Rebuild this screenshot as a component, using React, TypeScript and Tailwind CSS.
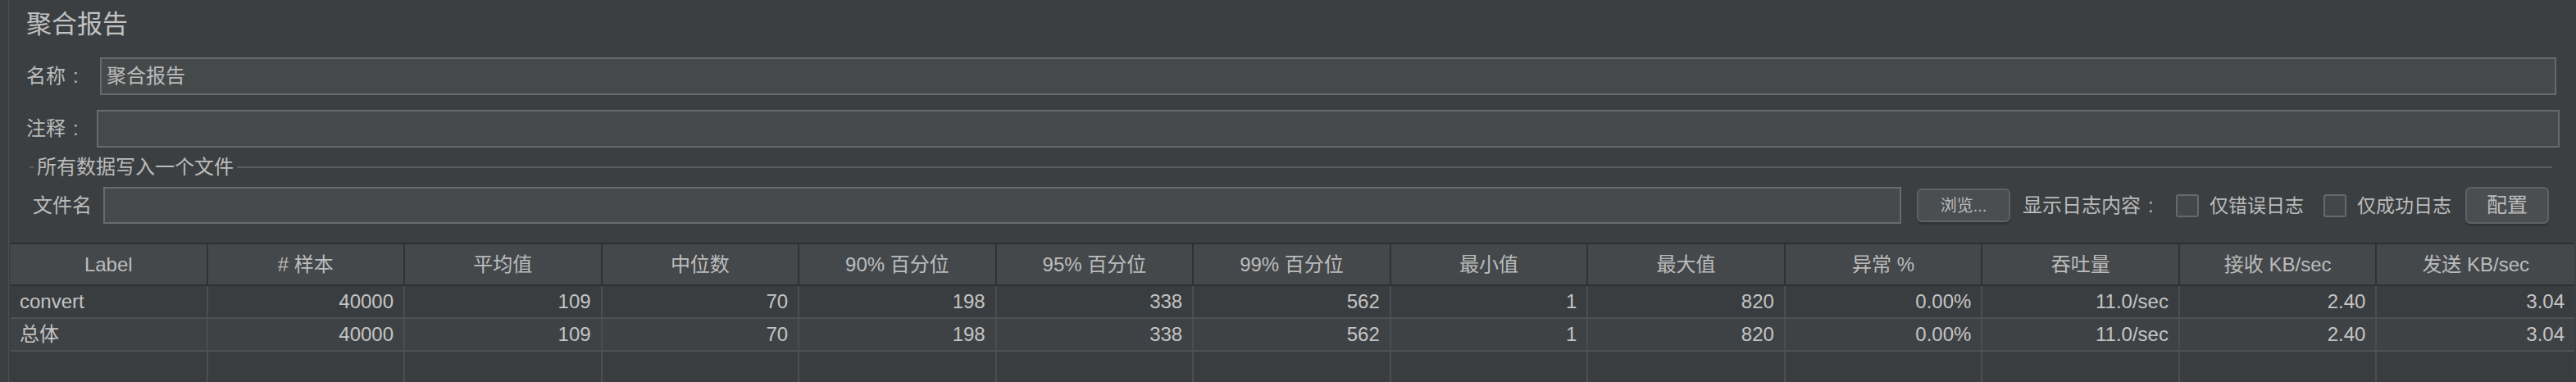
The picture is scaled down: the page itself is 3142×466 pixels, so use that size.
import React from "react";

const font = { fontFamily: '"Liberation Sans", "Noto Sans CJK SC", sans-serif' };

const headers = [
  "Label",
  "# 样本",
  "平均值",
  "中位数",
  "90% 百分位",
  "95% 百分位",
  "99% 百分位",
  "最小值",
  "最大值",
  "异常 %",
  "吞吐量",
  "接收 KB/sec",
  "发送 KB/sec",
];

const rows = [
  ["convert", "40000", "109", "70", "198", "338", "562", "1", "820", "0.00%", "11.0/sec", "2.40", "3.04"],
  ["总体", "40000", "109", "70", "198", "338", "562", "1", "820", "0.00%", "11.0/sec", "2.40", "3.04"],
];

function Checkbox() {
  return <div className="w-[28px] h-[28px] rounded-[3px] border-2 border-[#666869] bg-[#43474a] shrink-0" />;
}

function Button({ children, className }: { children: React.ReactNode; className: string }) {
  return (
    <div
      className={`flex items-center justify-center rounded-[6px] border-2 border-[#5f6264] bg-[#4a4e50] shadow-[0_3px_0_#323436] text-[#bbbbbb] shrink-0 ${className}`}
    >
      {children}
    </div>
  );
}

// label with the spaced colon used by the swing dark theme
function Label({ text, className }: { text: string; className: string }) {
  return (
    <div className={`flex items-center text-[24px] leading-[24px] shrink-0 ${className}`}>
      <span>{text}</span>
      <span className="ml-[9px]">:</span>
    </div>
  );
}

export default function App() {
  return (
    <div className="w-[3142px] h-[466px] bg-[#3c3f41] pl-[10px] overflow-hidden text-[#bbbbbb]" style={font}>
      <div className="h-full border-l border-[#4d5052] flex flex-col">
        {/* title */}
        <div className="pl-[21px] pt-[15px] text-[31px] leading-[30px] text-[#c2c2c2]">聚合报告</div>

        {/* name */}
        <div className="flex items-center mt-[25px] pl-[21px] pr-[24px]">
          <Label text="名称" className="w-[90px]" />
          <div className="flex-1 h-[46px] border-2 border-[#686a6b] bg-[#46494a] flex items-center pl-[6px] text-[24px] leading-[24px]">
            聚合报告
          </div>
        </div>

        {/* comment */}
        <div className="flex items-center mt-[18px] pl-[21px] pr-[20px]">
          <Label text="注释" className="w-[86px]" />
          <div className="flex-1 h-[46px] border-2 border-[#686a6b] bg-[#46494a]" />
        </div>

        {/* group separator */}
        <div className="flex items-center mt-[12px] pl-[25px] pr-[29px] h-[24px]">
          <div className="w-[5px] h-[2px] bg-[#595b5d]" />
          <div className="px-[4px] text-[24px] leading-[24px] shrink-0">所有数据写入一个文件</div>
          <div className="flex-1 h-[2px] bg-[#595b5d]" />
        </div>

        {/* file row */}
        <div className="flex items-center mt-[12px] pl-[29px] h-[45px]">
          <div className="w-[86px] text-[24px] leading-[24px] shrink-0">文件名</div>
          <div className="w-[2193px] h-[45px] border-2 border-[#686a6b] bg-[#46494a] shrink-0" />
          <Button className="ml-[19px] w-[114px] h-[41px] text-[20px] leading-[20px]">浏览...</Button>
          <Label text="显示日志内容" className="ml-[15px] w-[172px]" />
          <div className="ml-[15px]">
            <Checkbox />
          </div>
          <div className="ml-[13px] text-[23px] leading-[24px] shrink-0">仅错误日志</div>
          <div className="ml-[24px]">
            <Checkbox />
          </div>
          <div className="ml-[13px] text-[23px] leading-[24px] shrink-0">仅成功日志</div>
          <Button className="ml-[17px] w-[102px] h-[45px] text-[25px] leading-[25px]">配置</Button>
        </div>

        {/* table */}
        <div className="mt-[23px] ml-[2px] mr-[2px] flex-1 border-t-2 border-[#2d2f31] bg-[#3a3d3f]">
          <div className="grid grid-cols-13 h-[51px] bg-[#45484b] border-b-2 border-[#2e3032]">
            {headers.map((h, i) => (
              <div
                key={h}
                className={`flex items-center justify-center text-[24px] leading-[24px] text-[#bcbcbc] ${
                  i < headers.length - 1 ? "border-r-2 border-[#2f3133]" : ""
                }`}
              >
                {h}
              </div>
            ))}
          </div>
          {rows.map((r, ri) => (
            <div
              key={ri}
              className={`grid grid-cols-13 h-[40px] border-b-2 border-[#4e5052] ${
                ri % 2 === 0 ? "bg-[#3a3d3f]" : "bg-[#3f4245]"
              }`}
            >
              {r.map((c, ci) => (
                <div
                  key={ci}
                  className={`flex items-center text-[24px] leading-[24px] text-[#c4c4c4] ${
                    ci === 0 ? "justify-start pl-[11px]" : "justify-end pr-[12px]"
                  } ${ci < r.length - 1 ? "border-r-2 border-[#4b4d4f]" : ""}`}
                >
                  {c}
                </div>
              ))}
            </div>
          ))}
          <div className="grid grid-cols-13 h-[60px]">
            {headers.map((h, i) => (
              <div key={h} className={i < headers.length - 1 ? "border-r-2 border-[#4b4d4f]" : ""} />
            ))}
          </div>
        </div>
      </div>
    </div>
  );
}
